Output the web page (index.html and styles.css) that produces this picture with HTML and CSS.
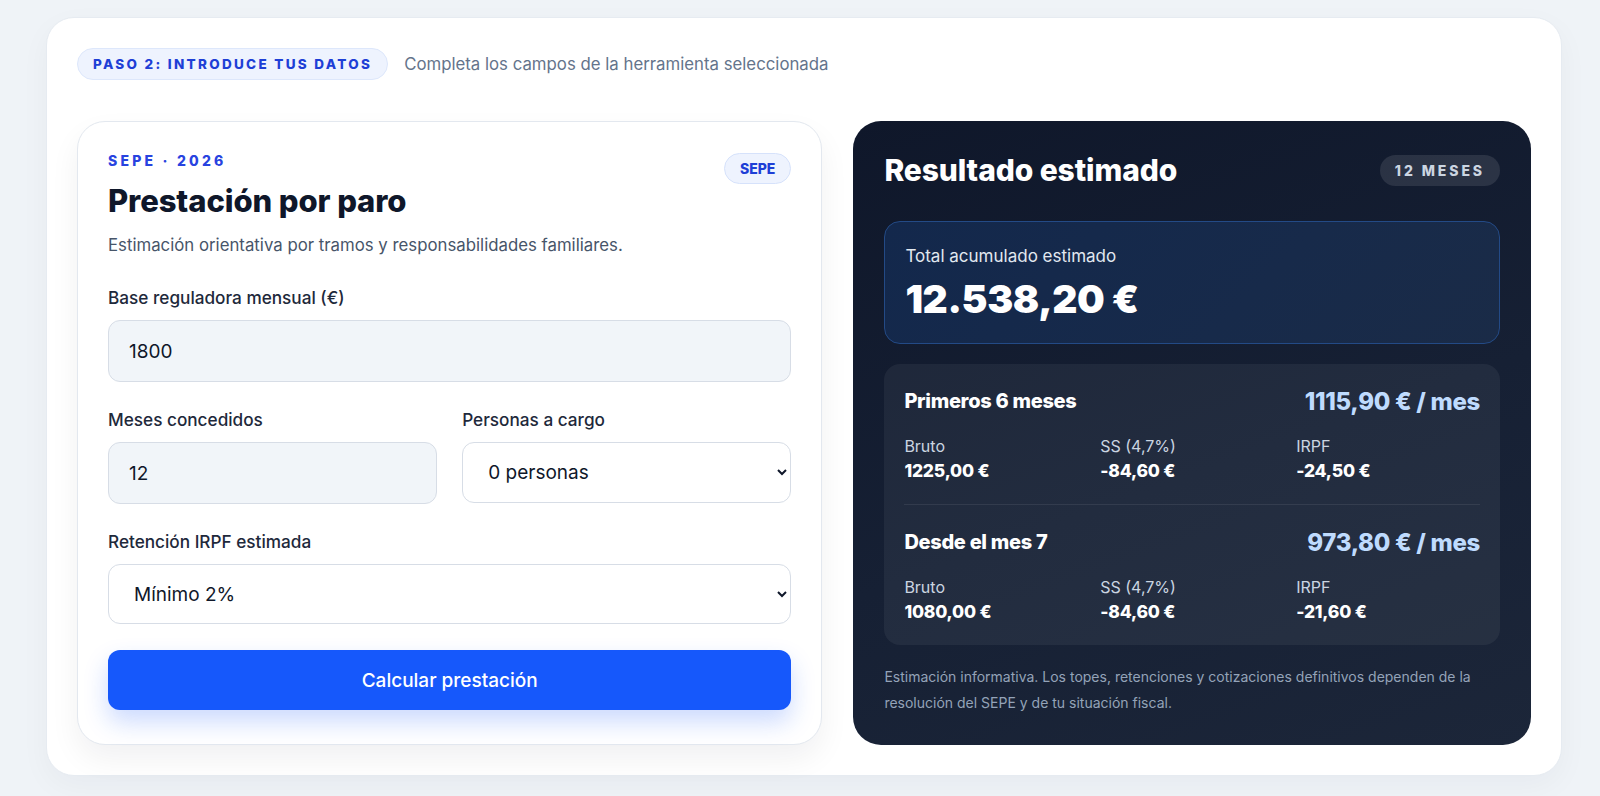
FILE: index.html
```html
<!DOCTYPE html>
<html lang="es">
<head>
<meta charset="utf-8">
<title>Prestación por paro</title>
<link rel="stylesheet" href="styles.css">
</head>
<body>
<main class="shell">
  <div class="step-row">
    <span class="step-pill">PASO 2: INTRODUCE TUS DATOS</span>
    <span class="step-text">Completa los campos de la herramienta seleccionada</span>
  </div>
  <div class="grid">
    <section class="form-card">
      <div class="form-head">
        <div>
          <div class="eyebrow">SEPE · 2026</div>
          <h1 class="title">Prestación por paro</h1>
        </div>
        <span class="badge">SEPE</span>
      </div>
      <p class="subtitle">Estimación orientativa por tramos y responsabilidades familiares.</p>
      <div class="field">
        <label class="label">Base reguladora mensual (€)</label>
        <input class="input" type="text" value="1800">
      </div>
      <div class="field-row">
        <div class="field">
          <label class="label">Meses concedidos</label>
          <input class="input" type="text" value="12">
        </div>
        <div class="field">
          <label class="label">Personas a cargo</label>
          <select class="select"><option>0 personas</option></select>
        </div>
      </div>
      <div class="field">
        <label class="label">Retención IRPF estimada</label>
        <select class="select"><option>Mínimo 2%</option></select>
      </div>
      <button class="button" type="button">Calcular prestación</button>
    </section>
    <section class="result-card">
      <div class="result-head">
        <h2 class="result-title">Resultado estimado</h2>
        <span class="months">12 MESES</span>
      </div>
      <div class="total-box">
        <div class="total-label">Total acumulado estimado</div>
        <div class="total-value">12.538,20 €</div>
      </div>
      <div class="breakdown">
        <div class="period">
          <div class="period-head">
            <span class="period-name">Primeros 6 meses</span>
            <span class="period-value">1115,90 € / mes</span>
          </div>
          <div class="cols">
            <div><div class="col-label">Bruto</div><div class="col-value">1225,00 €</div></div>
            <div><div class="col-label">SS (4,7%)</div><div class="col-value">-84,60 €</div></div>
            <div><div class="col-label">IRPF</div><div class="col-value">-24,50 €</div></div>
          </div>
        </div>
        <div class="divider"></div>
        <div class="period">
          <div class="period-head">
            <span class="period-name">Desde el mes 7</span>
            <span class="period-value">973,80 € / mes</span>
          </div>
          <div class="cols">
            <div><div class="col-label">Bruto</div><div class="col-value">1080,00 €</div></div>
            <div><div class="col-label">SS (4,7%)</div><div class="col-value">-84,60 €</div></div>
            <div><div class="col-label">IRPF</div><div class="col-value">-21,60 €</div></div>
          </div>
        </div>
      </div>
      <p class="note">Estimación informativa. Los topes, retenciones y cotizaciones definitivos dependen de la resolución del SEPE y de tu situación fiscal.</p>
    </section>
  </div>
</main>
</body>
</html>
```
FILE: styles.css
```css
* { box-sizing: border-box; }
html, body { margin: 0; padding: 0; }
body {
  background: #eff3f7;
  font-family: Inter, "Noto Sans", sans-serif;
  color: #0f172a;
  height: 796px;
  overflow: hidden;
}
.shell {
  margin: 17px 38px 0 46px;
  background: #ffffff;
  border: 1px solid #e6ebf1;
  border-radius: 28px;
  padding: 30px 30px 30px 30px;
  box-shadow: 0 10px 30px rgba(15, 23, 42, 0.04);
}
.step-row {
  display: flex;
  align-items: center;
  gap: 16px;
  height: 32px;
}
.step-pill {
  display: inline-flex;
  align-items: center;
  height: 32px;
  padding: 0 15px;
  border-radius: 16px;
  background: #eef3fe;
  border: 1px solid #dde7fb;
  color: #1e3fd6;
  font-size: 13.5px;
  font-weight: 800;
  letter-spacing: 2.3px;
}
.step-text {
  font-size: 16.8px;
  color: #64748b;
}
.grid {
  display: grid;
  grid-template-columns: 1.1fr 1fr;
  gap: 31px;
  margin-top: 41px;
}
.form-card {
  border: 1px solid #e3e8ef;
  border-radius: 28px;
  padding: 31px 30px 34px 30px;
  background: #fff;
  box-shadow: 0 14px 30px rgba(15, 23, 42, 0.06);
}
.form-head {
  display: flex;
  justify-content: space-between;
  align-items: flex-start;
}
.eyebrow {
  font-size: 14px;
  line-height: 16px;
  font-weight: 800;
  letter-spacing: 3.2px;
  color: #2843e0;
}
.title {
  margin: 14px 0 0 0;
  font-size: 31px;
  line-height: 36px;
  font-weight: 800;
  letter-spacing: -0.1px;
  color: #0f172a;
}
.badge {
  display: inline-flex;
  align-items: center;
  height: 31px;
  padding: 0 15px;
  border-radius: 16px;
  background: #eef3fe;
  border: 1px solid #d6e2fb;
  color: #1e3fd6;
  font-size: 14px;
  font-weight: 800;
}
.subtitle {
  margin: 14px 0 31px 0;
  font-size: 16.8px;
  line-height: 24px;
  color: #475569;
}
.field { display: flex; flex-direction: column; margin-bottom: 28px; min-width: 0; }
.field-row {
  display: grid;
  grid-template-columns: minmax(0, 1fr) minmax(0, 1fr);
  gap: 25px;
}
.label {
  font-size: 17.2px;
  line-height: 20px;
  font-weight: 500;
  color: #1e293b;
  margin-bottom: 12px;
}
.input {
  width: 100%;
  height: 62px;
  border: 1px solid #d7dde6;
  border-radius: 12px;
  background: #f1f5f9;
  padding: 0 20px;
  font-family: Inter, sans-serif;
  font-size: 19px;
  color: #0f172a;
  outline: none;
}
.select {
  width: 100%;
  height: 60px;
  border: 1px solid #d7dde6;
  border-radius: 12px;
  background: #ffffff;
  padding: 0 21px;
  font-family: Inter, sans-serif;
  font-size: 19px;
  color: #0f172a;
  outline: none;
}
.field-row .field .select { height: 61px; }
.button {
  display: block;
  width: 100%;
  height: 60px;
  margin-top: -2px;
  border: none;
  border-radius: 12px;
  background: #1658fb;
  color: #ffffff;
  font-family: Inter, sans-serif;
  font-size: 19px;
  font-weight: 500;
  box-shadow: 0 12px 24px rgba(22, 88, 251, 0.22);
}
.result-card {
  border-radius: 28px;
  padding: 32px 31px 26px 31px;
  background: linear-gradient(160deg, #0f172a 0%, #162034 55%, #1c2639 100%);
  color: #ffffff;
}
.result-head {
  display: flex;
  justify-content: space-between;
  align-items: center;
  height: 34px;
}
.result-title {
  margin: 0;
  font-size: 30px;
  line-height: 34px;
  font-weight: 800;
  letter-spacing: -0.1px;
  color: #ffffff;
}
.months {
  display: inline-flex;
  align-items: center;
  height: 31px;
  padding: 0 15px;
  border-radius: 16px;
  background: rgba(255, 255, 255, 0.1);
  color: #cbd5e1;
  font-size: 14px;
  font-weight: 800;
  letter-spacing: 2.9px;
}
.total-box {
  margin-top: 34px;
  border: 1px solid #234a86;
  border-radius: 16px;
  background: linear-gradient(135deg, #13284c 0%, #172a4a 60%, #1a2b47 100%);
  padding: 23px 20px 22px 20px;
}
.total-label {
  font-size: 17px;
  line-height: 22px;
  color: #e2e8f0;
}
.total-value {
  margin-top: 10px;
  font-size: 39px;
  line-height: 44px;
  font-weight: 900;
  letter-spacing: -0.4px;
  color: #ffffff;
}
.breakdown {
  margin-top: 20px;
  border-radius: 16px;
  background: rgba(255, 255, 255, 0.055);
  padding: 24px 20px 22px 20px;
}
.period-head {
  display: flex;
  justify-content: space-between;
  align-items: center;
  height: 26px;
}
.period-name {
  font-size: 20px;
  font-weight: 800;
  letter-spacing: -0.3px;
  color: #ffffff;
}
.period-value {
  font-size: 24px;
  font-weight: 800;
  letter-spacing: -0.3px;
  color: #bfdbfe;
}
.cols {
  display: grid;
  grid-template-columns: 1fr 1fr 1fr;
  gap: 12px;
  margin-top: 21px;
}
.col-label {
  font-size: 16px;
  line-height: 22px;
  color: #cbd5e1;
}
.col-value {
  margin-top: 3px;
  font-size: 17.5px;
  line-height: 22px;
  font-weight: 800;
  letter-spacing: -0.2px;
  color: #ffffff;
}
.divider {
  height: 1px;
  background: rgba(255, 255, 255, 0.08);
  margin: 22px 0 24px 0;
}
.note {
  margin: 19px 0 0 0;
  font-size: 14px;
  line-height: 26px;
  color: #94a3b8;
}
```
